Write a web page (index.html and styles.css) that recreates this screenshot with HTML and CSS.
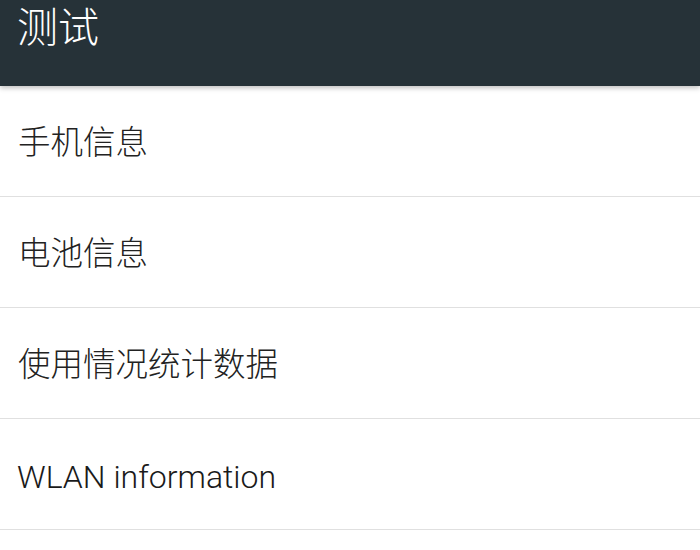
FILE: index.html
```html
<!DOCTYPE html>
<html lang="zh-CN">
<head>
  <meta charset="UTF-8" />
  <meta name="viewport" content="width=device-width, initial-scale=1.0"/>
  <title>测试</title>
  <link rel="stylesheet" href="styles.css">
</head>
<body>

  <header class="toolbar">
    <h1 class="title">测试</h1>
  </header>

  <ul class="list">
    <li class="item">手机信息</li>
    <li class="item">电池信息</li>
    <li class="item">使用情况统计数据</li>
    <li class="item latin">WLAN information</li>
  </ul>

</body>
</html>
```

FILE: styles.css
```css
body {
  margin: 0;
  font-family: Roboto, "Noto Sans CJK SC", sans-serif;
  background-color: #fff;
  color: #222;
}

.toolbar {
  position: relative;
  z-index: 1;
  height: 86px;
  background-color: #263238;
  box-shadow: 0 2px 5px rgba(0, 0, 0, 0.25);
}

.title {
  margin: 0;
  padding-left: 17px;
  font-size: 41px;
  font-weight: 300;
  line-height: 56px;
  color: #fff;
}

.list {
  list-style: none;
  margin: 0;
  padding: 0;
}

.item {
  height: 107px;
  padding-bottom: 3px;
  display: flex;
  align-items: center;
  padding-left: 18px;
  font-size: 32.5px;
  font-weight: 300;
  border-bottom: 1px solid #e0e0e0;
}

.item.latin {
  height: 105px;
  padding-top: 5px;
  padding-bottom: 0;
  padding-left: 17px;
  font-size: 32px;
  color: #1a1a1a;
}
```
